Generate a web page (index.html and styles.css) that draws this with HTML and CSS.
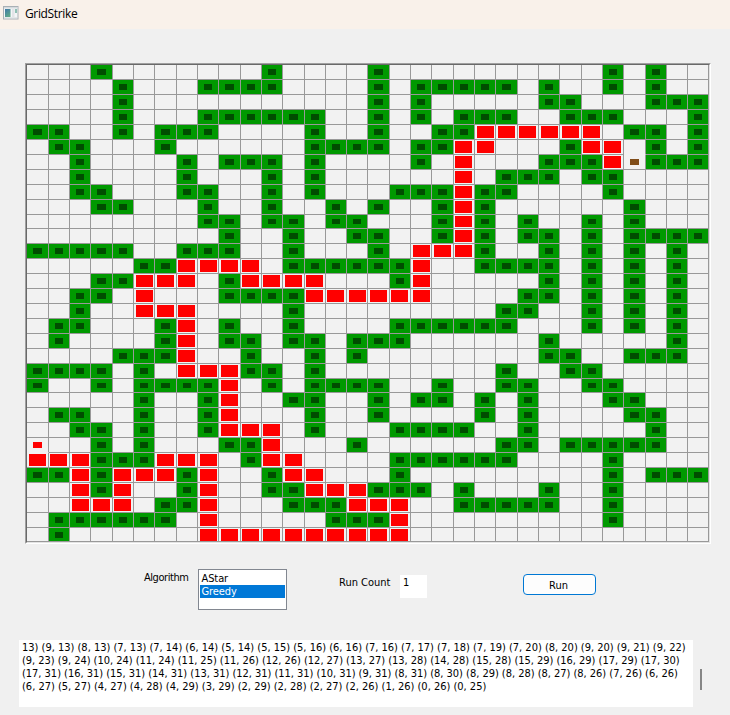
FILE: index.html
```html
<!DOCTYPE html>
<html lang="en">
<head>
<meta charset="utf-8">
<title>GridStrike</title>
<link rel="stylesheet" href="styles.css">
</head>
<body>
<header class="titlebar">
  <svg class="app-icon" width="16" height="14" viewBox="0 0 16 14">
    <defs><linearGradient id="pane" x1="0" y1="0" x2="0.6" y2="1"><stop offset="0" stop-color="#3f78a8"/><stop offset="1" stop-color="#5fa88a"/></linearGradient></defs>
    <rect x="0.5" y="0.5" width="14.5" height="12.5" fill="#f4f6f7" stroke="#a9b0b5"/>
    <rect x="1" y="1" width="13.5" height="1.5" fill="#d5dadd"/>
    <rect x="2" y="3" width="5.5" height="8" fill="url(#pane)"/>
    <rect x="9" y="3" width="2.5" height="8" fill="#e2e4e8"/>
    <rect x="12" y="3" width="2" height="4" fill="#8fc0b4"/>
    <rect x="1" y="11.5" width="13.5" height="1" fill="#d0d5d9"/>
  </svg>
  <span class="title">GridStrike</span>
</header>
<main class="window">
  <div class="frame"><div class="board" id="board"></div></div>
  <section class="controls">
    <label class="algorithm-label">Algorithm</label>
    <ul class="algorithms"><li>AStar</li><li class="selected">Greedy</li></ul>
    <label class="count-label">Run Count</label>
    <div class="count">1</div>
    <button class="run">Run</button>
  </section>
  <section class="output">
    <div class="log">
      <p>13) (9, 13) (8, 13) (7, 13) (7, 14) (6, 14) (5, 14) (5, 15) (5, 16) (6, 16) (7, 16) (7, 17) (7, 18) (7, 19) (7, 20) (8, 20) (9, 20) (9, 21) (9, 22)</p>
      <p class="dense">(9, 23) (9, 24) (10, 24) (11, 24) (11, 25) (11, 26) (12, 26) (12, 27) (13, 27) (13, 28) (14, 28) (15, 28) (15, 29) (16, 29) (17, 29) (17, 30)</p>
      <p class="dense">(17, 31) (16, 31) (15, 31) (14, 31) (13, 31) (12, 31) (11, 31) (10, 31) (9, 31) (8, 31) (8, 30) (8, 29) (8, 28) (8, 27) (8, 26) (7, 26) (6, 26)</p>
      <p>(6, 27) (5, 27) (4, 27) (4, 28) (4, 29) (3, 29) (2, 29) (2, 28) (2, 27) (2, 26) (1, 26) (0, 26) (0, 25)</p>
    </div>
    <div class="scroll-thumb"></div>
  </section>
</main>
<script src="board.js"></script>
</body>
</html>
```
FILE: styles.css
```css
* { box-sizing: border-box; }
body {
  margin: 0;
  width: 730px;
  height: 715px;
  overflow: hidden;
  background: #f0f0f0;
  color: #000;
  font: 11px/13px "DejaVu Sans Condensed", "DejaVu Sans", sans-serif;
}
.titlebar {
  display: flex;
  height: 29px;
  padding: 6px 0 0 3px;
  background: #f9f1ea;
}
.title {
  margin-left: 6px;
  font: 12px/16px "Open Sans", "Noto Sans", sans-serif;
  letter-spacing: -0.35px;
}
.window { padding: 34px 0 0 25px; }
.frame {
  width: 686px;
  height: 481px;
  border: 1px solid;
  border-color: #a0a0a0 #fff #fff #a0a0a0;
}
.board {
  display: grid;
  width: 684px;
  height: 479px;
  border: 1px solid;
  border-color: #696969 #e3e3e3 #e3e3e3 #696969;
}
.cell {
  border: solid #999;
  border-width: 0 1px 1px 0;
  background: #f2f2f2;
}
.wall { padding: 4px 6px; background: #090; }
.wall i { display: block; height: 100%; background: #004d00; }
.wall.last { padding-bottom: 3px; }
.path { padding: 1px 0 1px 2px; }
.path.snug { padding-left: 1px; }
.path.last { padding-bottom: 0; }
.path i { display: block; width: 17px; height: 100%; background: #f00; }
.mark { padding: 4px 6px; }
.mark i { display: block; height: 100%; background: #f00; }
.goal i { background: #804d19; }
.open { border-bottom-color: #f2f2f2; }
.controls {
  display: flex;
  height: 96px;
  padding-top: 25px;
}
.algorithm-label { width: 54px; margin-left: 119px; padding-top: 2px; letter-spacing: -0.45px; }
.algorithms {
  width: 89px;
  height: 41px;
  margin: 0;
  padding: 2px 1px;
  border: 1px solid #828790;
  background: #fff;
  list-style: none;
  letter-spacing: -0.1px;
}
.algorithms li { height: 13px; padding-left: 1.5px; }
.algorithms .selected { background: #0078d7; color: #fff; }
.count-label { width: 61px; margin-left: 52px; padding-top: 7px; }
.count {
  width: 27px;
  height: 23px;
  margin-top: 6px;
  padding: 1px 3px;
  background: #fff;
}
.run {
  width: 73px;
  height: 21px;
  margin: 5px 0 0 96px;
  padding: 1px 2px 0 0;
  border: 1px solid #0078d4;
  border-radius: 4px;
  background: #fdfdfd;
  color: #000;
  font: inherit;
}
.output { display: flex; margin-left: -6px; }
.log {
  width: 674px;
  height: 67px;
  padding: 1px 3px;
  background: #fff;
  white-space: nowrap;
}
.log p { margin: 0; height: 13px; letter-spacing: -0.01px; }
.log .dense { letter-spacing: -0.028px; }
.scroll-thumb {
  width: 2px;
  height: 21px;
  margin: 29px 0 0 7px;
  background: #868686;
}
```
FILE: board.js
```js
// Column lists per row; "8-11" stands for an inclusive range.
const SIZE = 32;
const WALLS = [
  "3 11 16 27 29",
  "4 8-11 16 18-22 24 27 29",
  "4 16 18 24 25 29-31",
  "4 8-13 16 18 20-22 25-27 31",
  "0 1 4 6-8 13 16 19 20 28 29 31",
  "1 2 6 13-16 18 19 25 29 31",
  "2 7 9-11 13 18 24-26 29-31",
  "2 7 11 13 22-24 26 27",
  "2 3 7 8 11 13 17-19 21 22 27",
  "3 4 8 11 14 16 19 21 28",
  "8 9 11 12 14 15 19 21 23 26 28",
  "9 12 15 16 19 21 23 24 26 28-31",
  "0-4 7-9 12 16 21 24 26 28 30",
  "5 6 12-17 21-24 26 28 30",
  "3 4 9 17 24 26 28 30",
  "2 3 9-12 23 24 26 28 30",
  "2 12 22 23 26 28 30",
  "1 2 6 9 12 17-22 26 28 30",
  "1 6 9 10 12 13 15-17 24 30",
  "4-6 10 13 15 24 25 28-30",
  "0-3 5 10 11 13 22 25 26",
  "0 3 5-8 11 13-16 19 22 23 26 27",
  "5 8 12 13 16 18 19 21 23 27 28",
  "1 2 5 8 13 16 21 23 28 29",
  "2 3 5 8 13 17-20 23 29",
  "3 5 9 10 15 22 23 25-29",
  "3-5 10 17-22 27",
  "0 1 3 7 11 17 27 29-31",
  "3 7 11 12 16-18 20 24 27",
  "6 7 12-14 20-24 27",
  "1-6 14-16 27",
  "1"
];
const PATH = {
  4: "21-26", 5: "20 21 26 27", 6: "20 27", 7: "20", 8: "20", 9: "20", 10: "20",
  11: "20", 12: "18-20", 13: "7-10 18", 14: "5-7 10-13 18", 15: "5 13-18",
  16: "5-7", 17: "7", 18: "7", 19: "7", 20: "7-9", 21: "9", 22: "9", 23: "9",
  24: "9-11", 25: "11", 26: "0-2 6-8 11 12", 27: "2 4-6 8 12 13", 28: "2 4 8 13-15",
  29: "2-4 8 15-17", 30: "8 17", 31: "8-17"
};

function columns(text) {
  const found = new Set();
  (text || "").split(" ").filter(Boolean).forEach(part => {
    const [from, to = from] = part.split("-").map(Number);
    for (let c = from; c <= to; c++) found.add(c);
  });
  return found;
}

function tracks(total) {
  const step = total / SIZE;
  return Array.from({ length: SIZE }, (_, k) =>
    Math.ceil((k + 1) * step) - Math.ceil(k * step) + "px").join(" ");
}

const board = document.getElementById("board");
board.style.gridTemplateColumns = tracks(682);
board.style.gridTemplateRows = tracks(477);

for (let r = 0; r < SIZE; r++) {
  const walls = columns(WALLS[r]);
  const path = columns(PATH[r]);
  for (let c = 0; c < SIZE; c++) {
    const cell = document.createElement("div");
    cell.className = "cell";
    if (walls.has(c)) cell.classList.add("wall");
    else if (path.has(c)) {
      cell.classList.add("path");
      const part = (c * 682 / SIZE) % 1;
      if (part > 0 && part < 0.5) cell.classList.add("snug");
    }
    else if (r === 25 && c === 0) cell.classList.add("mark", "open");
    else if (r === 6 && c === 28) cell.classList.add("mark", "goal");
    else if (r === 5 && c === 28) cell.classList.add("open");
    if (cell.className !== "cell") cell.appendChild(document.createElement("i"));
    if (r === SIZE - 1) cell.classList.add("last");
    board.appendChild(cell);
  }
}
```
